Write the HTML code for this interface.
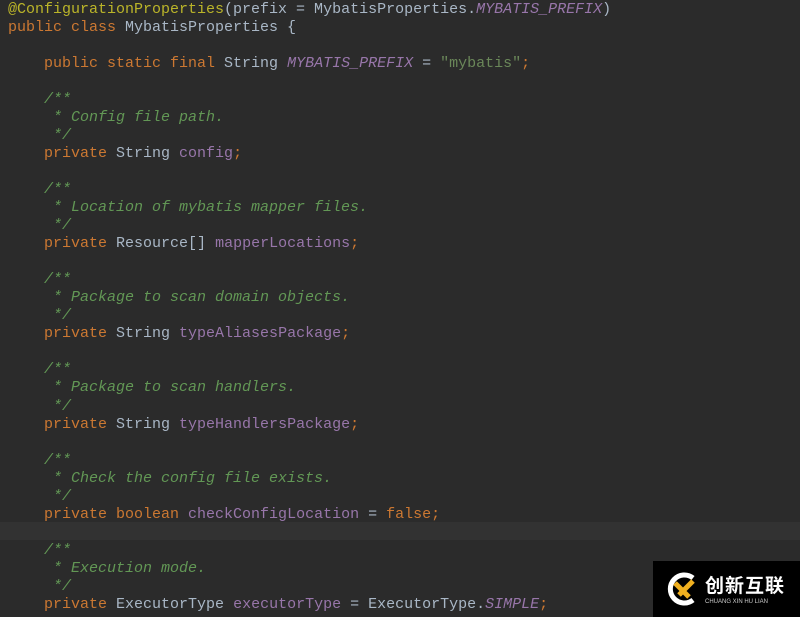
<!DOCTYPE html>
<html><head><meta charset="utf-8"><style>
body{margin:0;width:800px;height:617px;background:#2b2b2b;overflow:hidden;position:relative}
pre{margin:0;position:absolute;left:8px;top:0.5px;font:15px/18.05px "Liberation Mono",monospace;color:#a9b7c6;white-space:pre}
.k{color:#cc7832}.a{color:#bbb529}.f{color:#9876aa}.i{color:#9876aa;font-style:italic}.c{color:#629755;font-style:italic}.s{color:#6a8759}.si{font-style:italic}
.hl{position:absolute;left:0;top:522px;width:800px;height:18px;background:#323232}
.wm{position:absolute;left:653px;top:561px;width:147px;height:56px;background:#000}
</style></head><body>
<div class="hl"></div>
<pre><span class="a">@ConfigurationProperties</span>(prefix = MybatisProperties.<span class="i">MYBATIS_PREFIX</span>)
<span class="k">public class </span>MybatisProperties {

    <span class="k">public static final </span>String <span class="i">MYBATIS_PREFIX </span>= <span class="s">"mybatis"</span><span class="k">;</span>

    <span class="c">/**
</span><span class="c">     * Config file path.
</span><span class="c">     */
</span>    <span class="k">private </span>String <span class="f">config</span><span class="k">;</span>

    <span class="c">/**
</span><span class="c">     * Location of mybatis mapper files.
</span><span class="c">     */
</span>    <span class="k">private </span>Resource[] <span class="f">mapperLocations</span><span class="k">;</span>

    <span class="c">/**
</span><span class="c">     * Package to scan domain objects.
</span><span class="c">     */
</span>    <span class="k">private </span>String <span class="f">typeAliasesPackage</span><span class="k">;</span>

    <span class="c">/**
</span><span class="c">     * Package to scan handlers.
</span><span class="c">     */
</span>    <span class="k">private </span>String <span class="f">typeHandlersPackage</span><span class="k">;</span>

    <span class="c">/**
</span><span class="c">     * Check the config file exists.
</span><span class="c">     */
</span>    <span class="k">private boolean </span><span class="f">checkConfigLocation </span>= <span class="k">false;</span>

    <span class="c">/**
</span><span class="c">     * Execution mode.
</span><span class="c">     */
</span>    <span class="k">private </span>ExecutorType <span class="f">executorType </span>= ExecutorType.<span class="i">SIMPLE</span><span class="k">;</span>
</pre>
<div class="wm">
<svg width="40" height="40" style="position:absolute;left:10px;top:8px" viewBox="0 0 40 40">
<path d="M30 9 A14 14 0 1 0 30 31" fill="none" stroke="#fff" stroke-width="5"/>
<path d="M12 14 L26 28 M30 12 L16 26" stroke="#f0b020" stroke-width="5"/>
</svg>
<div style="position:absolute;left:52px;top:10px;color:#fff;font:bold 19px 'Noto Sans CJK SC',sans-serif;letter-spacing:1px">创新互联</div>
<div style="position:absolute;left:52px;top:38px;color:#ccc;font:6px 'Liberation Sans',sans-serif">CHUANG XIN HU LIAN</div>
</div>
</body></html>
